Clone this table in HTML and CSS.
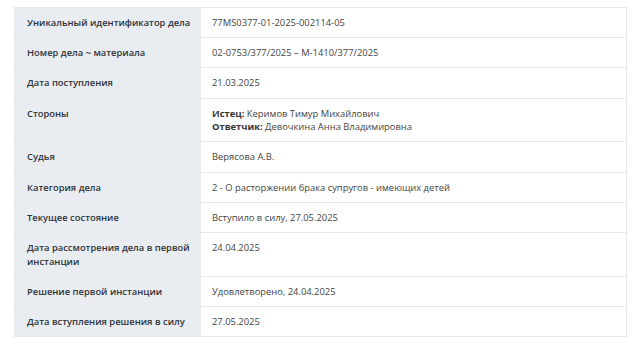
FILE: index.html
```html
<!DOCTYPE html>
<html lang="ru">
<head>
<meta charset="utf-8">
<link rel="stylesheet" href="styles.css">
</head>
<body>
<table class="info">
  <tr><th>Уникальный идентификатор дела</th><td>77MS0377-01-2025-002114-05</td></tr>
  <tr><th>Номер дела ~ материала</th><td>02-0753/377/2025 – М-1410/377/2025</td></tr>
  <tr><th>Дата поступления</th><td>21.03.2025</td></tr>
  <tr><th>Стороны</th><td><b>Истец:</b> Керимов Тимур Михайлович<br><b>Ответчик:</b> Девочкина Анна Владимировна</td></tr>
  <tr><th>Судья</th><td>Верясова А.В.</td></tr>
  <tr><th>Категория дела</th><td>2 - О расторжении брака супругов - имеющих детей</td></tr>
  <tr><th>Текущее состояние</th><td>Вступило в силу, 27.05.2025</td></tr>
  <tr><th>Дата рассмотрения дела в первой инстанции</th><td>24.04.2025</td></tr>
  <tr><th>Решение первой инстанции</th><td>Удовлетворено, 24.04.2025</td></tr>
  <tr><th>Дата вступления решения в силу</th><td>27.05.2025</td></tr>
</table>
</body>
</html>
```
FILE: styles.css
```css
html, body {
  margin: 0;
  background: #ffffff;
}
body {
  padding: 7px 13px 0 14px;
  font-family: "Open Sans", "Noto Sans", sans-serif;
  font-size: 9.4px;
  color: #333;
}
.info {
  width: 613px;
  border-collapse: collapse;
  border: 1px solid #e6e9ec;
  table-layout: fixed;
}
.info th,
.info td {
  border-top: 1px solid #e6e9ec;
  padding: 8px 11px 7.6px 11px;
  line-height: 13.6px;
  vertical-align: top;
  text-align: left;
}
.info th {
  width: 166px;
  background: #e9edf1;
  font-weight: 600;
  color: #2e3338;
  padding-left: 12px;
  padding-right: 8px;
}
.info td {
  background: #fff;
  font-weight: 400;
  color: #444;
}
.info td b {
  font-weight: 700;
  color: #333;
}
```
